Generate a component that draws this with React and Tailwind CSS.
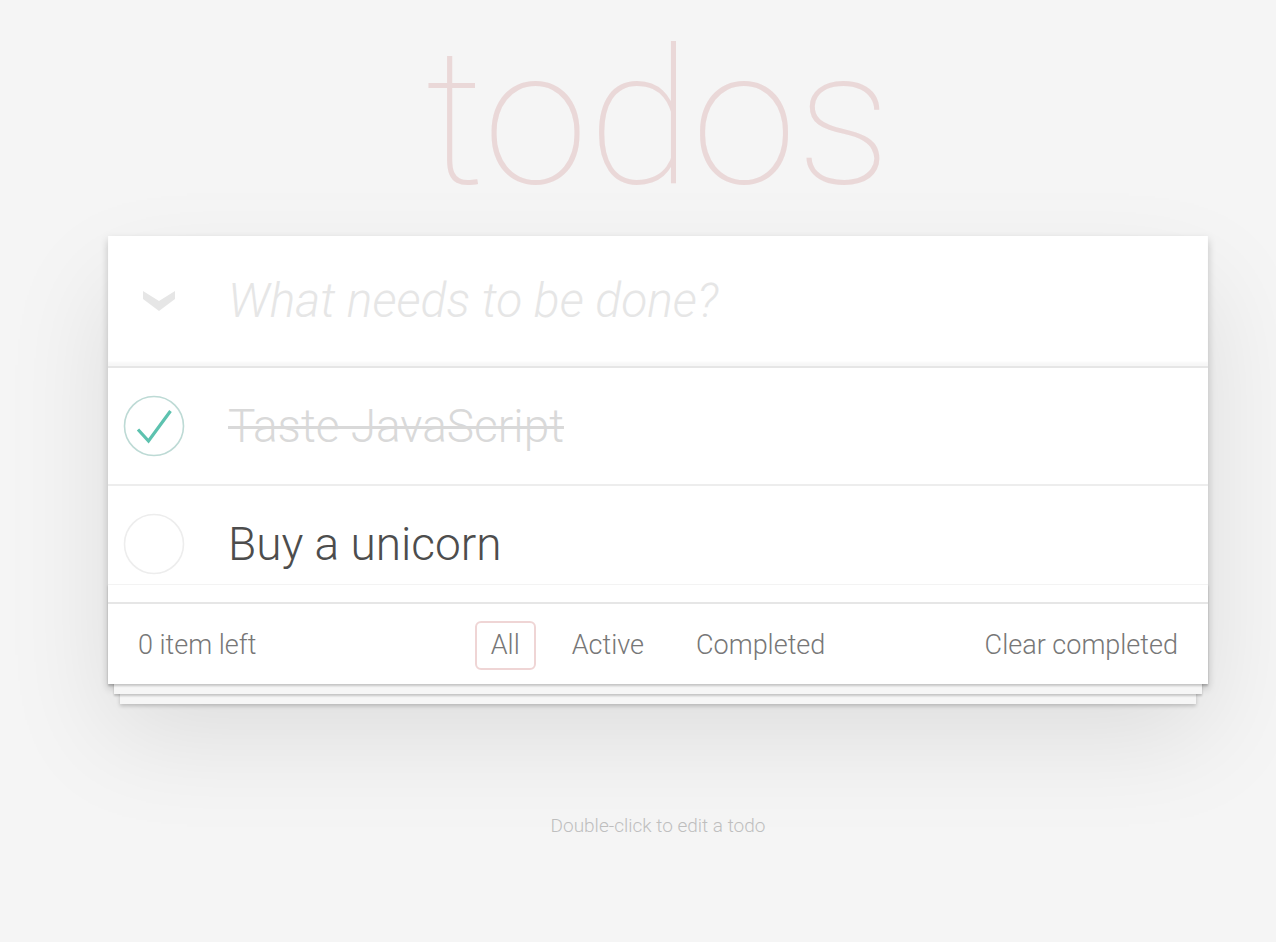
import React from "react";

const font = "font-['Roboto','Liberation_Sans',sans-serif]";

function Toggle({ done }) {
  return (
    <svg width="62" height="62" viewBox="0 0 62 62" className="shrink-0">
      <circle cx="31" cy="31" r="29.5" fill="none" stroke={done ? "#bddad5" : "#ededed"} strokeWidth="1.6" />
      {done && <path d="M15 34.5 L25.5 46 L47.5 16" fill="none" stroke="#5dc2af" strokeWidth="3.2" />}
    </svg>
  );
}

function TodoRow({ text, done, last }) {
  return (
    <li className={`relative flex items-center ${last ? "h-[116px]" : "h-[118px] border-b-2 border-[#ededed]"}`}>
      <div className="w-[120px] flex pl-[15px]">
        <Toggle done={done} />
      </div>
      <span
        className={`text-[46px] font-light leading-none ${done ? "text-[#d9d9d9] line-through decoration-[3px]" : "text-[#4d4d4d]"}`}
      >
        {text}
      </span>
    </li>
  );
}

export default function App() {
  return (
    <div className={`min-h-screen bg-[#f5f5f5] ${font} pb-10`}>
      <div className="w-[1100px] ml-[108px]">
        <h1 className="h-[236px] pt-[4px] text-center text-[190px] leading-[1.2] font-thin text-[#ead8d8]">
          todos
        </h1>

        <section className="relative bg-white shadow-[0_4px_8px_0_rgba(0,0,0,0.2),0_50px_100px_0_rgba(0,0,0,0.1)]">
          <header className="flex items-center h-[130px] shadow-[inset_0_-4px_2px_rgba(0,0,0,0.03)]">
            <div className="w-[120px] flex pl-[34px]">
              <svg width="34" height="22" viewBox="0 0 34 22">
                <path d="M1 1 L17 11 L33 1 L33 9 L17 21 L1 9 Z" fill="#e6e6e6" />
              </svg>
            </div>
            <input
              className="flex-1 bg-transparent outline-none text-[48px] font-light text-[#4d4d4d] placeholder:italic placeholder:text-[#e6e6e6] placeholder:font-light"
              placeholder="What needs to be done?"
            />
          </header>

          <ul className="border-t-2 border-[#e6e6e6]">
            <TodoRow text="Taste JavaScript" done />
            <TodoRow text="Buy a unicorn" last />
          </ul>

          <footer className="relative h-[82px] border-t-2 border-[#e6e6e6] flex items-center px-[30px] pt-[2px] text-[27px] font-light text-[#777777]">
            <div className="absolute left-0 right-0 bottom-0 h-[100px] pointer-events-none border-t border-[#f3f3f3] shadow-[0_2px_2px_rgba(0,0,0,0.2),0_16px_0_-6px_#f6f6f6,0_18px_2px_-6px_rgba(0,0,0,0.2),0_32px_0_-12px_#f6f6f6,0_34px_4px_-12px_rgba(0,0,0,0.2)]" />
            <span className="relative w-[340px]">0 item left</span>
            <div className="relative flex-1 flex items-center justify-center gap-[20px]">
              <span className="px-[14px] py-[6px] leading-[33px] border-2 border-[rgba(175,47,47,0.2)] rounded-[6px]">All</span>
              <span className="px-[14px] py-[6px] leading-[33px] border-2 border-transparent">Active</span>
              <span className="px-[14px] py-[6px] leading-[33px] border-2 border-transparent">Completed</span>
            </div>
            <span className="relative w-[340px] text-right">Clear completed</span>
          </footer>
        </section>

        <p className="mt-[128px] text-center text-[19px] font-light text-[#bfbfbf]">Double-click to edit a todo</p>
      </div>
    </div>
  );
}
